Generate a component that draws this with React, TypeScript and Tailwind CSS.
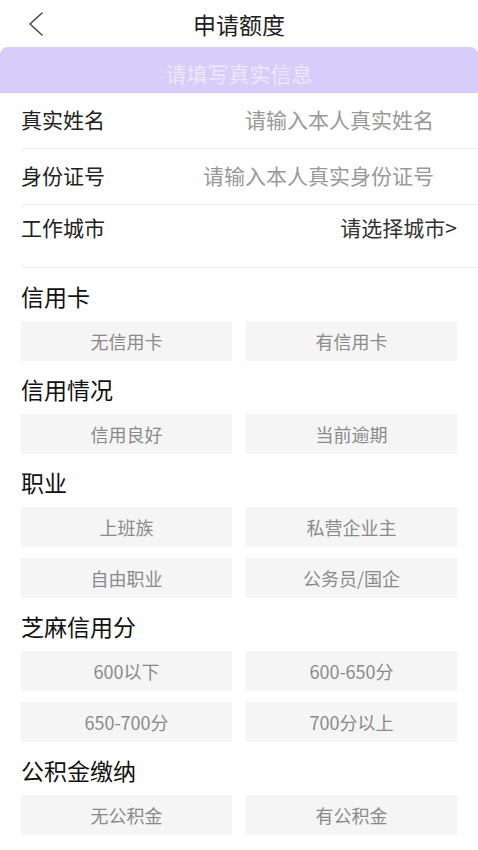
import React from "react";

const groups: { title: string; options: string[] }[] = [
  { title: "信用卡", options: ["无信用卡", "有信用卡"] },
  { title: "信用情况", options: ["信用良好", "当前逾期"] },
  { title: "职业", options: ["上班族", "私营企业主", "自由职业", "公务员/国企"] },
  { title: "芝麻信用分", options: ["600以下", "600-650分", "650-700分", "700分以上"] },
  { title: "公积金缴纳", options: ["无公积金", "有公积金"] },
];

function InfoRow({
  label,
  value,
  dark,
  className,
}: {
  label: string;
  value: string;
  dark?: boolean;
  className: string;
}) {
  return (
    <div className={"ml-[21px] flex justify-between border-b border-[#efefef] " + className}>
      <span className="text-[21px] leading-[24px] text-[#222222]">{label}</span>
      <span
        className={
          "text-[21px] leading-[24px] " +
          (dark ? "pr-[21px] text-[#333333]" : "pr-[44px] text-[#999999]")
        }
      >
        {value}
      </span>
    </div>
  );
}

export default function App() {
  return (
    <div className="w-[478px] min-h-[850px] bg-white font-['Noto_Sans_CJK_SC',sans-serif]">
      <div className="grid h-[47px] grid-cols-[1fr_auto_1fr] items-center">
        <div className="pl-[28px]">
          <svg width="16" height="24" viewBox="0 0 16 24" fill="none">
            <polyline
              points="14,1 2,12 14,23"
              stroke="#4a4a4a"
              strokeWidth="1.6"
              strokeLinecap="round"
              strokeLinejoin="round"
            />
          </svg>
        </div>
        <h1 className="text-[23px] leading-[28px] text-[#222222]">申请额度</h1>
        <div />
      </div>

      <div className="flex h-[46px] items-center justify-center rounded-t-[8px] bg-[#d6cdfb] pt-[8px] text-[21px] text-[#eee9fe]">
        请填写真实信息
      </div>

      <InfoRow label="真实姓名" value="请输入本人真实姓名" className="h-[56px] items-center pb-[4px]" />
      <InfoRow label="身份证号" value="请输入本人真实身份证号" className="h-[56px] items-center pb-[4px]" />
      <InfoRow label="工作城市" value="请选择城市>" dark className="h-[63px] items-start pt-[10px]" />

      <div className="px-[21px]">
        {groups.map((g) => (
          <div key={g.title}>
            <div className="pt-4 pb-[13px] text-[23px] leading-[24px] text-[#111111]">{g.title}</div>
            <div className="grid grid-cols-2 gap-x-[14px] gap-y-[11px]">
              {g.options.map((o) => (
                <div
                  key={o}
                  className="flex h-[40px] items-center justify-center bg-[#f5f5f5] text-[18px] text-[#8a8a8a]"
                >
                  {o}
                </div>
              ))}
            </div>
          </div>
        ))}
      </div>
    </div>
  );
}
